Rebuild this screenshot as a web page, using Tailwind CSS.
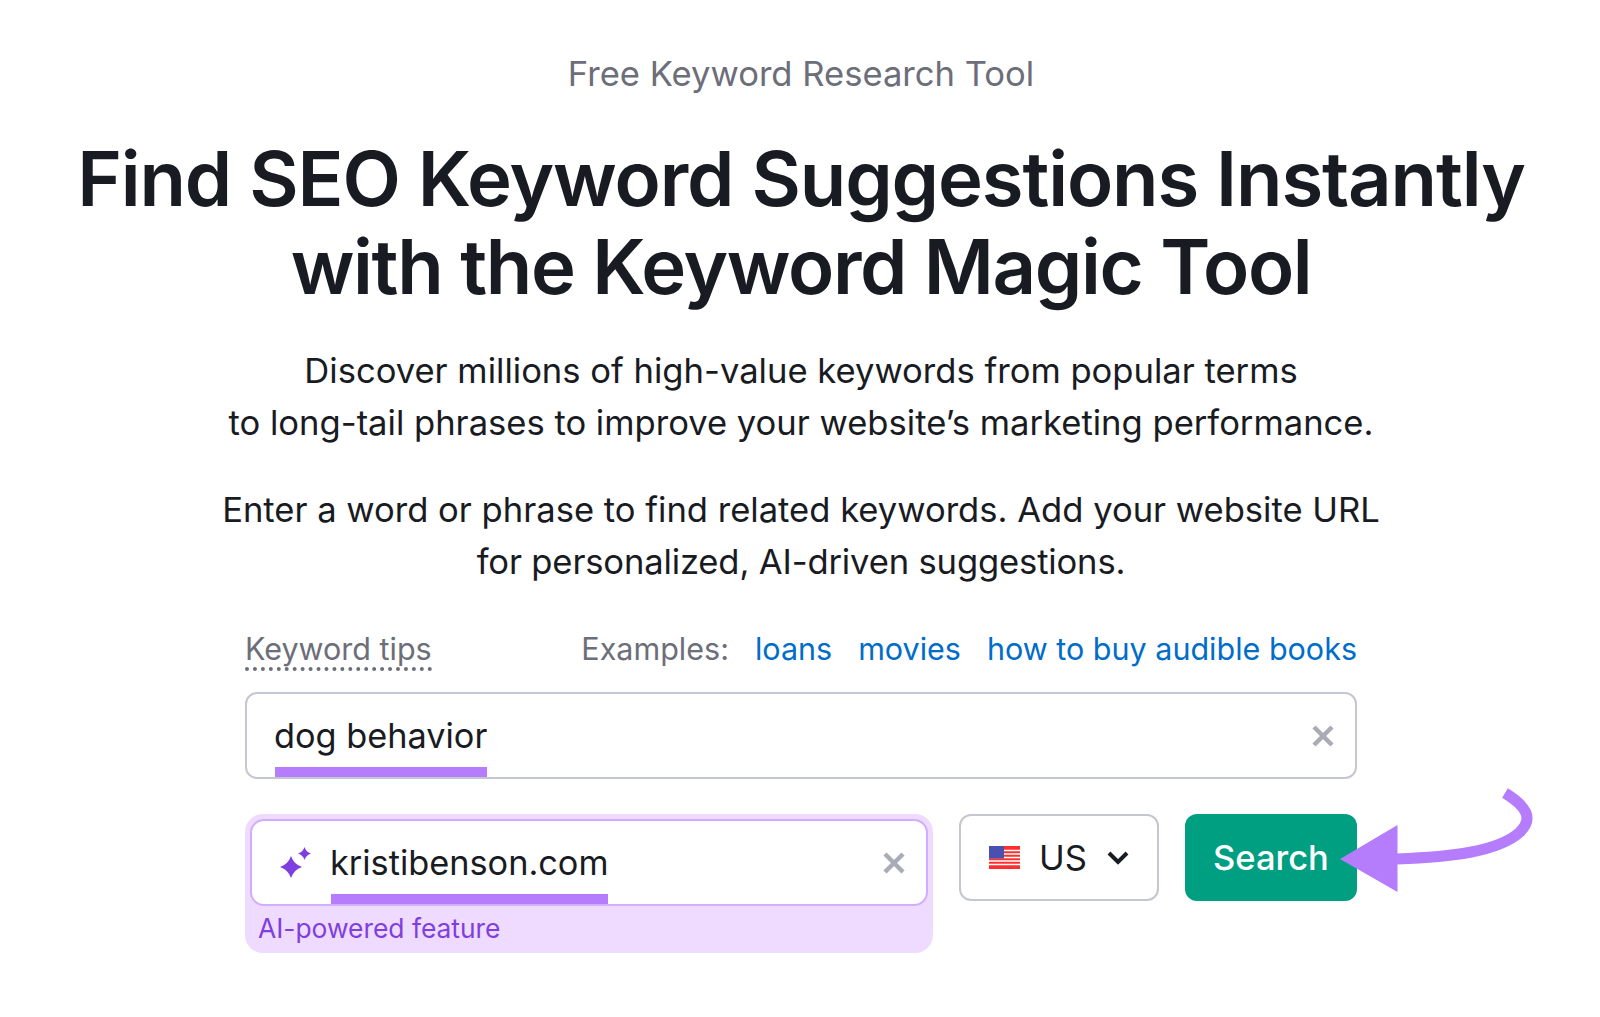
<!DOCTYPE html>
<html>
<head>
    <title>Keyword Magic Tool</title>
    <script src="https://cdn.jsdelivr.net/npm/@tailwindcss/browser@4"></script>
</head>
<body class="bg-white min-h-screen font-['Inter',sans-serif] overflow-hidden">
    <div class="relative w-[1600px] h-[1017px] flex flex-col items-center pt-[52px] pl-[2px]">
        <!-- Header -->
        <p class="text-[34.6px] leading-[42px] text-[#6c6e79]">Free Keyword Research Tool</p>
        <h1 class="mt-[40px] text-[76px] leading-[88px] font-semibold text-[#191b23] text-center whitespace-nowrap">
            <span class="tracking-[-1.12px]">Find SEO Keyword Suggestions Instantly</span><br>
            <span class="tracking-[-1.38px]">with the Keyword Magic Tool</span>
        </h1>
        <p class="mt-[34px] text-[34.6px] leading-[52px] text-[#191b23] text-center whitespace-nowrap">Discover millions of high-value keywords from popular terms<br>to long-tail phrases to improve your website’s marketing performance.</p>
        <p class="mt-[35px] text-[34.6px] leading-[52px] text-[#191b23] text-center whitespace-nowrap">Enter a word or phrase to find related keywords. Add your website URL<br><span class="tracking-[-0.15px]">for personalized, AI-driven suggestions.</span></p>

        <!-- Search form -->
        <div class="mt-[37px] w-[1112px]">
            <div class="flex items-center justify-between h-[50px] text-[30.5px] text-[#6c6e79]">
                <span class="mt-[4px] border-b-4 border-dotted border-[#6c6e79] leading-[36px]">Keyword tips</span>
                <div class="flex gap-[26px]">
                    <span>Examples:</span>
                    <a class="text-[#006dca]">loans</a>
                    <a class="text-[#006dca]">movies</a>
                    <a class="text-[#006dca]">how to buy audible books</a>
                </div>
            </div>

            <div class="relative mt-[18px] h-[87px] border-2 border-[#c4c7cf] rounded-[12px] flex items-center justify-between pl-[27px] pr-[20px] text-[34.3px] text-[#191b23]">
                <span class="relative">dog behavior<span class="absolute left-[1px] right-0 top-[57px] h-[10px] bg-[#b57cfc]"></span></span>
                <svg class="w-[24px] h-[24px]" viewBox="0 0 24 24"><path d="M3 3l18 18M21 3L3 21" stroke="#a9abb6" stroke-width="4.500"/></svg>
            </div>

            <div class="flex items-start mt-[35px]">
                <div class="w-[688px] h-[139px] rounded-[18px] bg-[#eedbff] p-[5px]">
                    <div class="h-[87px] bg-white border-2 border-[#d2adff] rounded-[14px] flex items-center justify-between pl-[27px] pr-[20px] text-[34.3px] text-[#191b23]">
                        <div class="flex items-center gap-[18px]">
                            <svg class="w-[33px] h-[33px]" viewBox="0 0 33 33" fill="#7f3fe0">
                                <path d="M12 10Q14.800 18.200 23 21Q14.800 23.800 12 32Q9.200 23.800 1 21Q9.200 18.200 12 10z"/>
                                <path d="M25.500 1Q27 6 32 7.500Q27 9 25.500 14Q24 9 19 7.500Q24 6 25.500 1z"/>
                            </svg>
                            <span class="relative">kristibenson.com<span class="absolute left-[1px] right-0 top-[57px] h-[10px] bg-[#b57cfc]"></span></span>
                        </div>
                        <svg class="w-[24px] h-[24px]" viewBox="0 0 24 24"><path d="M3 3l18 18M21 3L3 21" stroke="#a9abb6" stroke-width="4.500"/></svg>
                    </div>
                    <p class="pl-[8px] mt-[4px] text-[26.4px] leading-[36px] text-[#7f3fe0]">AI-powered feature</p>
                </div>

                <div class="ml-[26px] w-[200px] h-[87px] border-2 border-[#c4c7cf] rounded-[12px] flex items-center pl-[28px] text-[34.6px] text-[#191b23]">
                    <svg class="w-[31px] h-[23px]" viewBox="0 0 31 23">
                        <rect width="31" height="23" fill="#ff2f2f"/>
                        <path d="M0 4.500h31M0 8h31M0 11.500h31M0 15h31M0 18.500h31" stroke="#fff" stroke-width="1.500"/>
                        <rect width="15" height="12.500" fill="#4a50ad"/>
                    </svg>
                    <span class="ml-[19px]">US</span>
                    <svg class="ml-[19px] w-[24px] h-[16px]" viewBox="0 0 24 16"><path d="M3 3l9 9 9-9" fill="none" stroke="#191b23" stroke-width="4"/></svg>
                </div>

                <button class="ml-[26px] w-[172px] h-[87px] bg-[#009f81] rounded-[12px] text-[34.5px] font-medium text-white text-left pl-[28px]">Search</button>
            </div>
        </div>

        <!-- Arrow annotation -->
        <svg class="absolute left-[1330px] top-[780px] w-[210px] h-[120px]" viewBox="0 0 210 120">
            <path d="M67 79C120 77 168 72 190 52C204 38 196 26 175 13" fill="none" stroke="#b57cfc" stroke-width="11"/>
            <path d="M10 79L67.500 45V112z" fill="#b57cfc"/>
        </svg>
    </div>
</body>
</html>
